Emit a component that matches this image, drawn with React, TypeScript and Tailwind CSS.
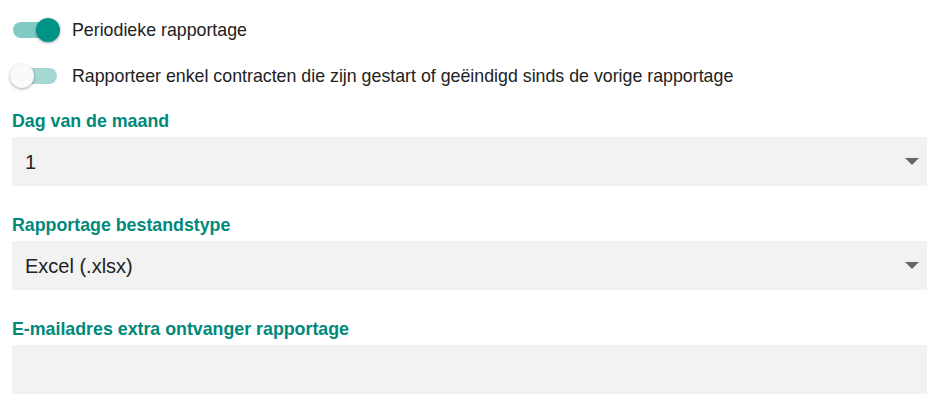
import { useState } from "react";

type ToggleProps = {
  checked: boolean;
  onChange: () => void;
  label: string;
};

const Toggle = ({ checked, onChange, label }: ToggleProps) => (
  <div className="flex h-[46px] items-center cursor-pointer" onClick={onChange}>
    <div className="relative h-6 w-[50px] shrink-0">
      <div
        className={`absolute left-[1px] top-[4px] h-4 w-[44px] rounded-full ${
          checked ? "bg-[#80cbc4]" : "bg-[#a6d8d3]"
        }`}
      />
      <div
        className={`absolute top-0 h-6 w-6 rounded-full shadow-[0_1px_3px_rgba(0,0,0,0.35)] ${
          checked ? "left-[24px] bg-[#009485]" : "left-[-2px] bg-[#fafafa]"
        }`}
      />
    </div>
    <span className="ml-[10px] text-[17.8px] text-[#222]">{label}</span>
  </div>
);

const Caret = () => (
  <svg width="14" height="7" viewBox="0 0 14 7" className="shrink-0">
    <path d="M0 0h14L7 7z" fill="#666" />
  </svg>
);

export default function App() {
  const [periodic, setPeriodic] = useState(true);
  const [onlyChanged, setOnlyChanged] = useState(false);

  return (
    <div className="min-h-screen bg-white px-[12px] pt-[7px] font-['Liberation_Sans',Arial,sans-serif]">
      <Toggle
        checked={periodic}
        onChange={() => setPeriodic(!periodic)}
        label="Periodieke rapportage"
      />
      <Toggle
        checked={onlyChanged}
        onChange={() => setOnlyChanged(!onlyChanged)}
        label="Rapporteer enkel contracten die zijn gestart of geëindigd sinds de vorige rapportage"
      />

      <div className="mt-[11px] flex flex-col">
        <div>
          <div className="text-[17.8px] font-bold leading-[22px] text-[#00897b]">Dag van de maand</div>
          <div className="mt-[5px] flex h-[49px] items-center bg-[#f2f2f2] pl-[13px] pr-[8px]">
            <span className="flex-1 text-[20px] text-[#222]">1</span>
            <Caret />
          </div>
        </div>
        <div className="mt-[28px]">
          <div className="text-[17.8px] font-bold leading-[22px] text-[#00897b]">Rapportage bestandstype</div>
          <div className="mt-[5px] flex h-[49px] items-center bg-[#f2f2f2] pl-[13px] pr-[8px]">
            <span className="flex-1 text-[20px] text-[#222]">Excel (.xlsx)</span>
            <Caret />
          </div>
        </div>
        <div className="mt-[28px]">
          <div className="text-[17.8px] font-bold leading-[22px] text-[#00897b]">
            E-mailadres extra ontvanger rapportage
          </div>
          <input
            type="email"
            className="mt-[5px] block h-[49px] w-full bg-[#f2f2f2] px-[13px] text-[20px] text-[#222] outline-none"
          />
        </div>
      </div>
    </div>
  );
}
